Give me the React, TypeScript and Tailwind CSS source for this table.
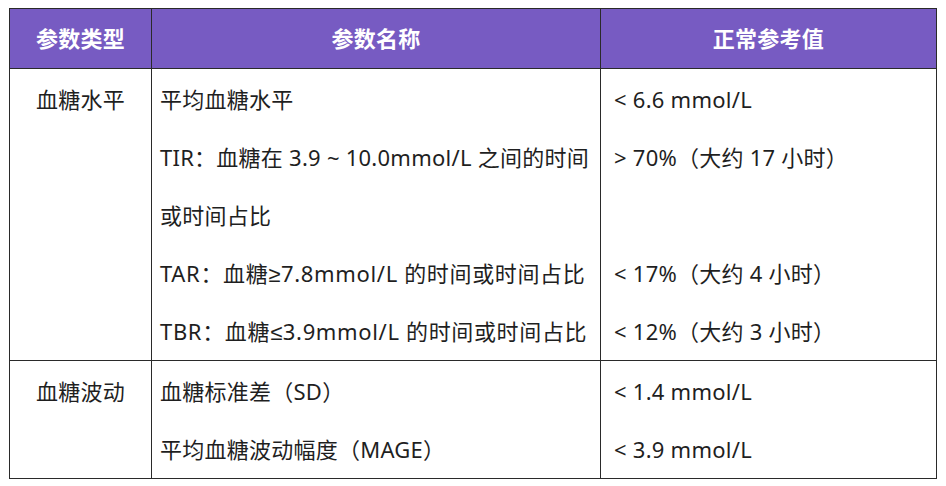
const font = {
  fontFamily: '"Noto Sans", "Noto Sans CJK SC", sans-serif',
};

type Row = {
  type: string;
  lines: { name: React.ReactNode; value: string }[];
};

const Sym = ({ c }: { c: string }) => (
  <span style={{ fontFamily: '"Liberation Sans", sans-serif' }}>{c}</span>
);

const rows: Row[] = [
  {
    type: "血糖水平",
    lines: [
      { name: "平均血糖水平", value: "< 6.6 mmol/L" },
      { name: "TIR：血糖在 3.9 ~ 10.0mmol/L 之间的时间", value: "> 70%（大约 17 小时）" },
      { name: "或时间占比", value: "" },
      {
        name: (
          <span className="tracking-[0.65px]">
            TAR：血糖<Sym c="≥" />7.8mmol/L 的时间或时间占比
          </span>
        ),
        value: "< 17%（大约 4 小时）",
      },
      {
        name: (
          <span className="tracking-[0.65px]">
            TBR：血糖<Sym c="≤" />3.9mmol/L 的时间或时间占比
          </span>
        ),
        value: "< 12%（大约 3 小时）",
      },
    ],
  },
  {
    type: "血糖波动",
    lines: [
      { name: "血糖标准差（SD）", value: "< 1.4 mmol/L" },
      { name: "平均血糖波动幅度（MAGE）", value: "< 3.9 mmol/L" },
    ],
  },
];

export default function App() {
  return (
    <div className="w-[946px] h-[486px] bg-white pt-[8px] pl-[9px]" style={font}>
      <table className="border-collapse table-fixed w-[928px] text-[22px] tracking-[0.25px] text-[#1f1f1f]">
        <colgroup>
          <col className="w-[142px]" />
          <col className="w-[449px]" />
          <col />
        </colgroup>
        <thead>
          <tr className="bg-[#775bc2] text-white h-[60px]">
            <th className="border border-[#2a2a2a] font-bold text-center">参数类型</th>
            <th className="border border-[#2a2a2a] font-bold text-center">参数名称</th>
            <th className="border border-[#2a2a2a] font-bold text-center">正常参考值</th>
          </tr>
        </thead>
        <tbody>
          {rows.map((row) => (
            <tr key={row.type}>
              <td className="border border-[#2a2a2a] align-top text-center leading-[58px] pt-px">
                {row.type}
              </td>
              <td className="border border-[#2a2a2a] align-top pl-[8px] pt-px">
                {row.lines.map((l, i) => (
                  <div key={i} className="h-[58px] leading-[58px] whitespace-nowrap">
                    {l.name}
                  </div>
                ))}
              </td>
              <td className="border border-[#2a2a2a] align-top pl-[13px] pt-px">
                {row.lines.map((l, i) => (
                  <div key={i} className="h-[58px] leading-[58px] whitespace-nowrap">
                    {l.value}
                  </div>
                ))}
              </td>
            </tr>
          ))}
        </tbody>
      </table>
    </div>
  );
}
